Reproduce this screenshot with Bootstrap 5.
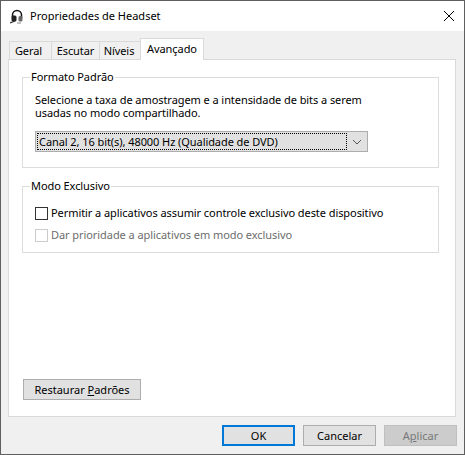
<!DOCTYPE html>
<html lang="pt-BR">
<head>
    <meta charset="UTF-8">
    <meta name="viewport" content="width=device-width, initial-scale=1.0">
    <link href="https://cdn.jsdelivr.net/npm/bootstrap@5.3.3/dist/css/bootstrap.min.css" rel="stylesheet">
    <title>Propriedades de Headset</title>
    <style>
        html, body {
            height: 100%;
            margin: 0;
            overflow: hidden;
        }
        body {
            background-color: #f0f0f0;
            font-family: "Noto Sans", "Open Sans", sans-serif;
            font-size: 11px;
            line-height: 16px;
            letter-spacing: -0.07px;
            color: #000;
        }
        .win-frame {
            height: 455px;
            border: 1px solid #5f5f5f;
            background-color: #f0f0f0;
        }
        .win-title {
            height: 30px;
            background-color: #fff;
            padding: 0 0 0 9px;
            gap: 6px;
            letter-spacing: 0;
        }
        .win-close {
            width: 10px;
            height: 10px;
            margin-right: 10px;
            margin-left: auto;
        }
        .win-tabs {
            margin: 7px 8px 0 7px;
            height: 21px;
            padding-left: 1px;
            border: 0;
            flex-wrap: nowrap;
        }
        .win-tab {
            height: 18px;
            margin-top: 3px;
            margin-bottom: 0;
            background-color: #f0f0f0;
            border: 1px solid #d9d9d9;
            border-bottom: 0;
            border-right: 0;
            padding: 1px 0 0;
            text-align: center;
            color: #000;
        }
        .win-tab.is-on {
            height: 22px;
            margin-top: 0;
            margin-bottom: -1px;
            background-color: #fff;
            border-right: 1px solid #d9d9d9;
            position: relative;
            z-index: 1;
            padding-top: 2px;
        }
        .tab-geral { width: 42px; padding-right: 4px; }
        .tab-escutar { width: 48px; }
        .tab-niveis { width: 41px; padding-right: 2px; }
        .tab-avancado { width: 64px; }
        .win-panel {
            margin: 0 8px 0 7px;
            height: 358px;
            background-color: #fff;
            border: 1px solid #d9d9d9;
            padding: 15px 16px 0 13px;
        }
        .win-group {
            border: 1px solid #dcdcdc;
            margin: 0;
            padding: 0 12px;
        }
        .win-group legend {
            float: none;
            width: auto;
            font-size: 11px;
            line-height: 16px;
            margin: 0 0 0 -5px;
            padding: 0 1px;
            color: #000;
        }
        .group-one {
            height: 99px;
            margin-top: -6px;
            padding-top: 8px;
        }
        .win-group-text {
            line-height: 13px;
        }
        .group-two {
            height: 75px;
            margin-top: 10px;
            padding-top: 12px;
        }
        .win-combo {
            width: 333px;
            height: 21px;
            margin-top: 12px;
            background-color: #e1e1e1;
            border: 1px solid #adadad;
            padding: 1px;
        }
        .win-combo-text {
            flex: 1;
            border: 1px dotted #000;
            line-height: 15px;
            padding-left: 1px;
            white-space: nowrap;
        }
        .win-combo-arrow {
            width: 19px;
            flex: none;
        }
        .win-check {
            height: 14px;
            gap: 3px;
            white-space: nowrap;
        }
        .win-box {
            width: 13px;
            height: 13px;
            flex: none;
            border: 1px solid #333;
            background-color: #fff;
        }
        .win-check.is-off {
            color: #6d6d6d;
            margin-top: 8px;
        }
        .win-check.is-off .win-box {
            border-color: #ccc;
        }
        .win-btn {
            width: 73px;
            height: 21px;
            padding: 0;
            border: 1px solid #adadad;
            border-radius: 0;
            background-color: #e1e1e1;
            color: #000;
            font-size: 11px;
            line-height: 17px;
        }
        .win-btn:disabled {
            opacity: 1;
            background-color: #ccc;
            border-color: #bfbfbf;
            color: #787878;
        }
        .win-btn.is-default {
            border: 2px solid #0078d7;
            line-height: 16px;
        }
        .win-btn.is-wide {
            width: 118px;
        }
        .win-restore {
            margin-top: 126px;
            margin-left: 1px;
        }
        .win-foot {
            margin: 8px 7px 0 0;
            gap: 8px;
        }
    </style>
</head>
<body>

    <div class="win-frame d-flex flex-column">
        <!-- Title bar -->
        <div class="win-title d-flex align-items-center">
            <svg width="14" height="15" viewBox="0 0 14 15">
                <path d="M2.5 9V6a4.5 4.5 0 0 1 9 0v3" fill="none" stroke="#111" stroke-width="1.5"/>
                <rect x="1.5" y="6.5" width="5" height="6" rx="1.5" fill="#222"/>
                <rect x="8.5" y="7" width="4" height="5.5" rx="1.5" fill="#666"/>
                <path d="M0 14l5-2" stroke="#333" stroke-width="1.3"/>
                <path d="M7 14h4" stroke="#888" stroke-width="1"/>
            </svg>
            <span>Propriedades de Headset</span>
            <svg class="win-close" viewBox="0 0 10 10">
                <path d="M0 0l10 10M10 0L0 10" stroke="#000" stroke-width="1" fill="none"/>
            </svg>
        </div>

        <!-- Tabs -->
        <div class="win-tabs nav">
            <div class="win-tab tab-geral">Geral</div>
            <div class="win-tab tab-escutar">Escutar</div>
            <div class="win-tab tab-niveis">Níveis</div>
            <div class="win-tab is-on tab-avancado">Avançado</div>
        </div>

        <div class="win-panel">
            <fieldset class="win-group group-one">
                <legend>Formato Padrão</legend>
                <div class="win-group-text">Selecione a taxa de amostragem e a intensidade de bits a serem<br>usadas no modo compartilhado.</div>
                <div class="win-combo d-flex">
                    <div class="win-combo-text">Canal 2, 16 bit(s), 48000 Hz (Qualidade de DVD)</div>
                    <div class="win-combo-arrow d-flex align-items-center justify-content-center">
                        <svg width="10" height="6" viewBox="0 0 10 6"><path d="M1 1l4 4 4-4" fill="none" stroke="#555" stroke-width="1"/></svg>
                    </div>
                </div>
            </fieldset>

            <fieldset class="win-group group-two">
                <legend>Modo Exclusivo</legend>
                <div class="win-check d-flex align-items-center">
                    <span class="win-box"></span>
                    <span>Permitir a aplicativos assumir controle exclusivo deste dispositivo</span>
                </div>
                <div class="win-check is-off d-flex align-items-center">
                    <span class="win-box"></span>
                    <span>Dar prioridade a aplicativos em modo exclusivo</span>
                </div>
            </fieldset>

            <button type="button" class="btn win-btn is-wide win-restore">Restaurar <u>P</u>adrões</button>
        </div>

        <!-- Dialog buttons -->
        <div class="win-foot d-flex justify-content-end">
            <button type="button" class="btn win-btn is-default">OK</button>
            <button type="button" class="btn win-btn">Cancelar</button>
            <button type="button" class="btn win-btn" disabled>A<u>p</u>licar</button>
        </div>
    </div>

    <script src="https://cdn.jsdelivr.net/npm/bootstrap@5.3.3/dist/js/bootstrap.bundle.min.js"></script>
</body>
</html>
